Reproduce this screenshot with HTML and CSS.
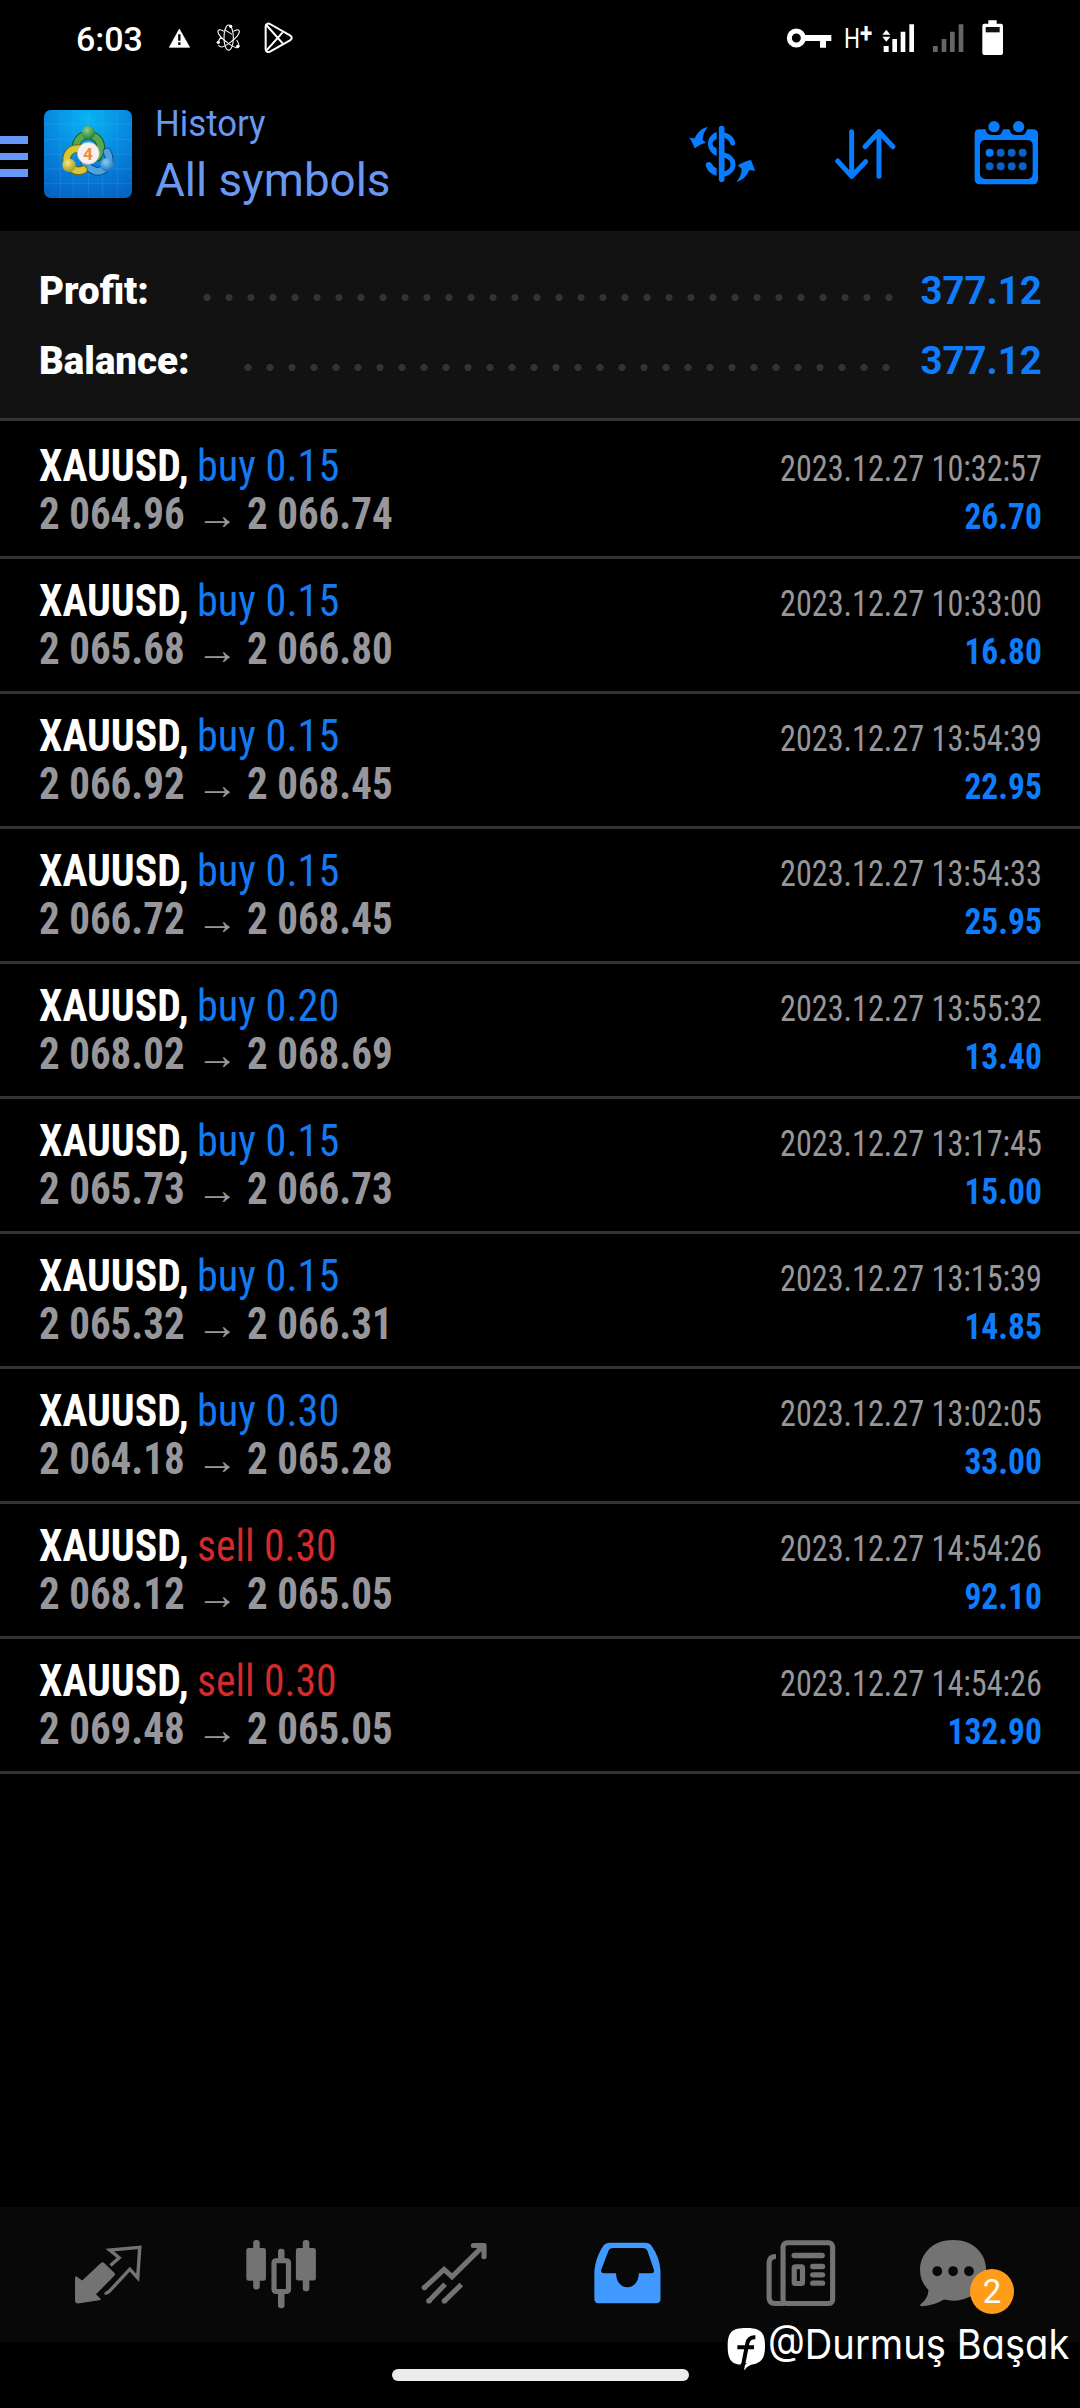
FILE: index.html
```
<!DOCTYPE html>
<html lang="en">
<head>
<meta charset="utf-8">
<title>History - All symbols</title>
<link rel="stylesheet" href="styles.css">
</head>
<body>
<div class="screen">
  <header class="status">
    <div class="status-left">
      <span class="clock">6:03</span>
      <svg class="warn" viewBox="504 55 69 120" width="23" height="40"><path d="M538 88L569 143H508Z" fill="#fff" stroke="#fff" stroke-width="2" stroke-linejoin="round"/><path d="M538 104v19M538 128v8" stroke="#000" stroke-width="7"/></svg>
      <svg class="atom" viewBox="645 55 81 120" width="27" height="40"><g fill="none" stroke="#fff" stroke-width="3.2"><ellipse cx="686" cy="114" rx="14" ry="38"/><path d="M700 95q12-8 17-3c5 8-9 25-31 40s-27 10-31 4M672 95q-12-8-17-3c-5 8 9 25 31 40s27 14 31 9q1-6-7-20M654 128q4-10 10-16M674 90l22 14"/></g><circle cx="692" cy="80" r="5" fill="#fff"/><circle cx="655" cy="128" r="5" fill="#fff"/><circle cx="713" cy="140" r="5" fill="#fff"/></svg>
      <svg class="play" viewBox="790 55 93 120" width="31" height="40"><g fill="none" stroke="#fff" stroke-width="6" stroke-linejoin="round"><path d="M798 80v69c0 7 7 10 13 7l60-34c7-4 7-11 0-15l-60-34c-6-3-13 0-13 7Z"/><path d="M800 76l49 55M800 153l49-55"/></g></svg>
    </div>
    <div class="status-right">
      <svg class="key" viewBox="318 55 141 120" width="47" height="40"><circle cx="349" cy="115" r="21" fill="none" stroke="#fff" stroke-width="15"/><path d="M374 106h80v18h-16v20h-18v-20h-46Z" fill="#fff"/></svg>
      <span class="net">H<span class="plus">+</span></span>
      <svg class="sig" viewBox="608 55 99 120" width="33" height="40"><path d="M621 90l12 15h-24zM621 126l12-15h-24zM613 139h15v18h-15zM639 118h14v39h-14zM664 96h14v61h-14zM690 74h14v83h-14z" fill="#fff"/></svg>
      <svg class="sig2" viewBox="757 55 99 120" width="33" height="40"><path d="M760 139h14v18h-14zM786 118h14v39h-14zM811 96h14v61h-14zM837 74h14v83h-14z" fill="#666"/></svg>
      <svg class="bat" viewBox="903 55 69 120" width="23" height="40"><path d="M925 62h25v10h13q6 0 6 6v82q0 6-6 6h-50q-6 0-6-6v-82q0-6 6-6h12z" fill="#fff"/><path d="M917 82h42v16h-42z" fill="#111"/></svg>
    </div>
  </header>

  <div class="appbar">
    <div class="burger"><i></i><i></i><i></i></div>
    <svg class="logo" viewBox="42 60 264 264" width="88" height="88">
      <defs>
        <radialGradient id="bg" cx=".5" cy=".1" r=".95"><stop offset="0" stop-color="#08b4f4"/><stop offset=".5" stop-color="#0788df"/><stop offset="1" stop-color="#0663c4"/></radialGradient>
        <radialGradient id="gr" cx=".4" cy=".3" r=".8"><stop offset="0" stop-color="#8dd08a"/><stop offset="1" stop-color="#176f2c"/></radialGradient>
        <radialGradient id="ye" cx=".4" cy=".3" r=".8"><stop offset="0" stop-color="#f3ec83"/><stop offset="1" stop-color="#9c8d12"/></radialGradient>
        <radialGradient id="bl" cx=".4" cy=".3" r=".8"><stop offset="0" stop-color="#8dcdf5"/><stop offset="1" stop-color="#0f69b5"/></radialGradient>
      </defs>
      <rect x="42" y="60" width="264" height="264" rx="20" fill="url(#bg)"/>
      <path d="M91 60v264M130 60v264M175 60v264M218 60v264M262 60v264M42 103h264M42 148h264M42 193h264M42 237h264M42 281h264" stroke="#5fc4f5" stroke-opacity=".28" stroke-width="2"/>
      <g fill="none" stroke-linecap="round">
        <path d="M139 170c0-46 71-46 73 0 0 14-4 22-10 31" stroke="#14552a" stroke-width="26"/><path d="M139 170c0-46 71-46 73 0 0 14-4 22-10 31" stroke="#56a84c" stroke-width="20"/>
        <path d="M231 186c20 35-12 66-38 56-13-5-22-14-29-24" stroke="#0c4f94" stroke-width="26"/><path d="M231 186c20 35-12 66-38 56-13-5-22-14-29-24" stroke="#4da4dc" stroke-width="20"/>
        <path d="M150 176c-38-4-50 34-32 54 13 12 29 15 42 9" stroke="#6d6510" stroke-width="26"/><path d="M150 176c-38-4-50 34-32 54 13 12 29 15 42 9" stroke="#d4c83a" stroke-width="20"/>
      </g>
      <circle cx="175" cy="128" r="20" fill="url(#gr)"/><circle cx="117" cy="226" r="20" fill="url(#ye)"/><circle cx="231" cy="224" r="20" fill="url(#bl)"/>
      <circle cx="175" cy="190" r="33" fill="#f4f2f1" stroke="#b9b5a6" stroke-width="2"/>
      <text x="174" y="210" text-anchor="middle" class="four">4</text>
    </svg>
    <div class="titles"><div class="sub">History</div><div class="title">All symbols</div></div>
    <div class="tools">
      <svg viewBox="21 360 210 200" width="70" height="66.7"><g fill="none" stroke="#087cff" stroke-linecap="round" stroke-width="15"><path d="M125 386v152" stroke-width="17"/><path d="M132 405c14 3 22 10 26 24M132 465c38 9 34 49 1 57"/></g><path d="M110 396v21c-16 6-17 21 0 28v23c-35-14-34-61 0-72ZM110 505v22c-18-4-30-17-33-33 0-8 12-12 17-4 4 7 8 12 16 15ZM84 380c-14 17-15 28-16 40l10 8c-10 3-20 6-34 17-5-13-9-21-17-33 6 3 12 3 18 2 6-16 20-30 39-34ZM169 546c14-17 15-28 16-40l-10-8c-2-4 4-5 10-8 8-4 16-8 28-10 4 10 8 18 12 33-6-3-12-3-18-2-6 16-19 31-38 35Z" fill="#087cff"/></svg>
      <svg viewBox="458 360 196 200" width="65.3" height="66.7"><path d="M514 395v134M472 483l42 46 42-44M596 529V396M554 440l42-45 42 45" fill="none" stroke="#087cff" stroke-width="15" stroke-linecap="round" stroke-linejoin="round"/></svg>
      <svg viewBox="880 360 200 200" width="66.7" height="66.7"><path fill-rule="evenodd" d="M898 388h20c2 12 8 17 17 17h20c9 0 12-7 15-17h20c2 12 8 17 17 17h20c9 0 13-7 15-17h18q15 0 15 15v135q0 15-15 15H900q-15 0-15-15V403q0-15 13-15ZM918 420q-17 0-17 17v83q0 17 17 17h124q17 0 17-17v-83q0-17-17-17Z" fill="#087cff"/><g fill="#087cff"><circle cx="943" cy="380" r="17"/><circle cx="1017" cy="380" r="17"/><circle cx="930" cy="458" r="12"/></g><g fill="#0a62c4"><circle cx="963" cy="458" r="12"/><circle cx="996" cy="458" r="12"/><circle cx="1029" cy="458" r="12"/><circle cx="930" cy="499" r="12"/><circle cx="963" cy="499" r="12"/><circle cx="996" cy="499" r="12"/><circle cx="1029" cy="499" r="12"/></g></svg>
    </div>
  </div>

  <section class="summary">
    <div class="sum"><b>Profit:</b><span class="dots d32"></span><span class="val">377.12</span></div>
    <div class="sum"><b>Balance:</b><span class="dots d30"></span><span class="val">377.12</span></div>
  </section>

  <main class="list">
    <div class="row"><div><div class="l"><b>XAUUSD,</b><span class="buy">buy 0.15</span></div><div class="l p"><span>2 064.96</span><i>→</i><span>2 066.74</span></div></div><div class="r"><div class="date">2023.12.27 10:32:57</div><div class="amt">26.70</div></div></div>
    <div class="row"><div><div class="l"><b>XAUUSD,</b><span class="buy">buy 0.15</span></div><div class="l p"><span>2 065.68</span><i>→</i><span>2 066.80</span></div></div><div class="r"><div class="date">2023.12.27 10:33:00</div><div class="amt">16.80</div></div></div>
    <div class="row"><div><div class="l"><b>XAUUSD,</b><span class="buy">buy 0.15</span></div><div class="l p"><span>2 066.92</span><i>→</i><span>2 068.45</span></div></div><div class="r"><div class="date">2023.12.27 13:54:39</div><div class="amt">22.95</div></div></div>
    <div class="row"><div><div class="l"><b>XAUUSD,</b><span class="buy">buy 0.15</span></div><div class="l p"><span>2 066.72</span><i>→</i><span>2 068.45</span></div></div><div class="r"><div class="date">2023.12.27 13:54:33</div><div class="amt">25.95</div></div></div>
    <div class="row"><div><div class="l"><b>XAUUSD,</b><span class="buy">buy 0.20</span></div><div class="l p"><span>2 068.02</span><i>→</i><span>2 068.69</span></div></div><div class="r"><div class="date">2023.12.27 13:55:32</div><div class="amt">13.40</div></div></div>
    <div class="row"><div><div class="l"><b>XAUUSD,</b><span class="buy">buy 0.15</span></div><div class="l p"><span>2 065.73</span><i>→</i><span>2 066.73</span></div></div><div class="r"><div class="date">2023.12.27 13:17:45</div><div class="amt">15.00</div></div></div>
    <div class="row"><div><div class="l"><b>XAUUSD,</b><span class="buy">buy 0.15</span></div><div class="l p"><span>2 065.32</span><i>→</i><span>2 066.31</span></div></div><div class="r"><div class="date">2023.12.27 13:15:39</div><div class="amt">14.85</div></div></div>
    <div class="row"><div><div class="l"><b>XAUUSD,</b><span class="buy">buy 0.30</span></div><div class="l p"><span>2 064.18</span><i>→</i><span>2 065.28</span></div></div><div class="r"><div class="date">2023.12.27 13:02:05</div><div class="amt">33.00</div></div></div>
    <div class="row"><div><div class="l"><b>XAUUSD,</b><span class="sell">sell 0.30</span></div><div class="l p"><span>2 068.12</span><i>→</i><span>2 065.05</span></div></div><div class="r"><div class="date">2023.12.27 14:54:26</div><div class="amt">92.10</div></div></div>
    <div class="row"><div><div class="l"><b>XAUUSD,</b><span class="sell">sell 0.30</span></div><div class="l p"><span>2 069.48</span><i>→</i><span>2 065.05</span></div></div><div class="r"><div class="date">2023.12.27 14:54:26</div><div class="amt">132.90</div></div></div>
  </main>

  <nav class="nav">
    <svg viewBox="64 21 502.4 404" preserveAspectRatio="none"><path d="M297 186q4 0 7 4l28 28q4 4 0 9l-53 55 14 14q0 4-5 4l-61 10q-9 0-9-9v-68q0-5 4-4l17 12 50-49q4-5 8-6Z" fill="#737373"/><path d="M321 196l25-23-27-23 87-8-6 91-23-26-59 66q-6 7-14 7" fill="none" stroke="#737373" stroke-width="10"/></svg>
    <svg viewBox="566 21 502.4 404" preserveAspectRatio="none"><g fill="#737373"><rect x="715" y="144" width="57" height="98" rx="7"/><rect x="735" y="120" width="19" height="148" rx="8"/><rect x="859" y="144" width="58" height="97" rx="7"/><rect x="879" y="120" width="19" height="153" rx="8"/><rect x="807" y="146" width="19" height="40" rx="8"/><rect x="807" y="272" width="19" height="52" rx="8"/></g><rect x="795.5" y="182" width="42" height="92" rx="5" fill="none" stroke="#737373" stroke-width="15"/></svg>
    <svg viewBox="1068 21 502.4 404" preserveAspectRatio="none"><path d="M1232 262l57-54 23 22 86-88M1245 302l47-50M1290 302l49-49" fill="none" stroke="#737373" stroke-width="15"/><path d="M1374 136h31v34" fill="none" stroke="#737373" stroke-width="15" stroke-linecap="round" stroke-linejoin="round"/><circle cx="1232" cy="262" r="8" fill="#737373"/><circle cx="1245" cy="302" r="8" fill="#737373"/><circle cx="1290" cy="302" r="8" fill="#737373"/></svg>
    <svg viewBox="3 21 502.4 404" preserveAspectRatio="none"><path fill-rule="evenodd" d="M203 128h103q12 0 18 9 24 36 26 75v84q0 13-13 13H171q-13 0-13-13v-84q4-42 26-75 7-9 19-9ZM211 144q-9 0-12 8l-21 57q-2 10 8 10h35c0 56 66 56 66 0h37q9 0 7-10l-19-57q-3-8-12-8Z" fill="#4099ff"/></svg>
    <svg viewBox="505 21 502.4 404" preserveAspectRatio="none"><g fill="none" stroke="#737373" stroke-width="15"><rect x="705.5" y="128" width="144" height="182" rx="12"/><path d="M685 169q-20 0-20 20v103q0 18 18 18h25"/><rect x="738" y="200" width="24" height="50" rx="3"/><path d="M738 166h81M792 199h28M792 224h28M792 249h28" stroke-width="16" stroke-linecap="round"/></g></svg>
    <div class="chat"><svg viewBox="1007 21 502.4 404" preserveAspectRatio="none"><path d="M1199 120c58 0 96 40 96 90 0 59-55 104-123 88-16 10-37 19-67 20-3-3-2-6 2-8 14-12 20-24 20-41-16-17-24-36-24-59 0-50 38-90 96-90Z" fill="#737373"/><g fill="#080808"><ellipse cx="1153" cy="213" rx="14" ry="15"/><ellipse cx="1199" cy="213" rx="14" ry="15"/><ellipse cx="1245" cy="213" rx="14" ry="15"/></g></svg><span class="badge">2</span></div>
  </nav>
  <footer class="gesture"><div class="pill"></div></footer>

  <div class="mark">
    <svg viewBox="20 22 116 132" width="38.7" height="44"><path d="M78 25c43 0 56 12 56 55 0 38-12 51-42 55q-12 4-20 17l1-16C35 136 22 124 22 80c0-43 13-55 56-55Z" fill="#fff"/><path d="M68 137l13-66q4-19 24-18M51 83h50" fill="none" stroke="#000" stroke-width="12"/><path d="M62 131h18l-8 6-1 8-12-2Z" fill="#000"/><path d="M77 134h14q-12 5-19 18Z" fill="#fff"/></svg>
    <span>@Durmuş Başak</span>
  </div>
</div>
</body>
</html>
```
FILE: styles.css
```
* { box-sizing: border-box; }
body { margin: 0; background: #000; font-family: Roboto, "Liberation Sans", sans-serif; }
.screen { position: relative; width: 1080px; height: 2408px; display: flex; flex-direction: column; overflow: hidden; background: #000; }
svg { display: block; flex: none; }

.status { height: 80px; display: flex; justify-content: space-between; align-items: flex-start; padding: 18px 76px 0 76px; color: #fff; }
.status-left, .status-right { display: flex; height: 40px; }
.clock { width: 92px; font-size: 34px; font-weight: 500; line-height: 42px; white-space: nowrap; }
.atom { margin-left: 24px; }
.play { margin-left: 21px; }
.net { width: 29px; margin-left: 11px; font-size: 28px; line-height: 42px; transform: scaleX(.8); transform-origin: left; white-space: nowrap; }
.plus { position: relative; top: -5px; font-weight: 700; }
.sig { margin-left: 9px; }
.sig2 { margin-left: 17px; }
.bat { margin-left: 16px; }

.appbar { height: 151px; display: flex; align-items: flex-start; padding-right: 40px; }
.burger { width: 28px; margin: 56px 16px 0 0; display: flex; flex-direction: column; gap: 9px; }
.burger i { height: 7.5px; background: #6598f8; }
.logo { margin-top: 30px; }
.four { font: 700 52px Roboto, sans-serif; fill: #ee8c3c; }
.titles { margin: 19px 0 0 22.5px; color: #6898ef; white-space: nowrap; }
.titles div { transform-origin: left; }
.sub { font-size: 36px; line-height: 50px; transform: scaleX(.965); }
.title { font-size: 46px; line-height: 60px; margin-top: 1px; transform: scaleX(.995); }
.tools { margin: 40px 0 0 auto; display: flex; gap: 75.5px; }

.summary { height: 190px; padding: 25px 39px 0; background: #121212; border-bottom: 3px solid #333; }
.sum { height: 70px; display: flex; justify-content: space-between; font-size: 38.5px; line-height: 70px; font-weight: 700; color: #fff; }
.sum b { flex: 1; }
.dots { height: 7px; margin-top: 38px; background: radial-gradient(circle at 50% 50%, #333 3.2px, transparent 3.9px) 0 0 / 22px 7px repeat-x; }
.d32 { width: 704px; margin-right: 20px; }
.d30 { width: 660px; margin-right: 23px; }
.val { width: 121.5px; color: #0f7cfb; transform: scaleX(.995); transform-origin: right; }

.list { flex: 1; padding-top: 3px; font-family: "Roboto Condensed", Roboto, sans-serif; }
.row { height: 135px; display: flex; justify-content: space-between; padding: 18px 38px 0 39px; border-bottom: 3px solid #333; white-space: nowrap; }
.l { display: flex; height: 48px; font-size: 44px; line-height: 48px; }
.l > * { transform-origin: left; }
.l b { width: 158px; color: #fff; transform: scaleX(.95); }
.buy { color: #147af2; transform: scaleX(.96); }
.sell { color: #d62a2a; transform: scaleX(.945); }
.p { color: #97979b; font-weight: 700; }
.p span { width: 156px; transform: scaleX(.932); }
.p i { width: 52px; padding-left: 1px; font-style: normal; font-size: 42px; line-height: 50px; }
.r { padding-top: 3px; text-align: right; font-size: 36px; line-height: 48px; }
.date { color: #97979b; transform: scaleX(.894); transform-origin: right; }
.amt { font-weight: 700; color: #0f7cfb; transform: scaleX(.93); transform-origin: right; }

.nav { height: 135px; padding: 0 20px 0 22px; display: flex; background: #080808; }
.nav svg { width: 173px; height: 135px; }
.chat { position: relative; }
.badge { position: absolute; left: 83px; top: 62px; width: 44px; height: 45px; border-radius: 50%; background: #ff9d1b; color: #fff; font-size: 33px; line-height: 46px; text-align: center; }
.gesture { height: 66px; display: flex; justify-content: center; padding-top: 27px; }
.pill { width: 297px; height: 12px; border-radius: 6px; background: #ebebeb; }

.mark { position: absolute; left: 726.7px; top: 2327.3px; display: flex; color: #fff; }
.mark span { margin: -8.3px 0 0 3px; width: 300px; font: 400 41px/50px Inter, sans-serif; font-feature-settings: "cv11"; white-space: nowrap; transform: scaleX(.93); transform-origin: left; }
```
